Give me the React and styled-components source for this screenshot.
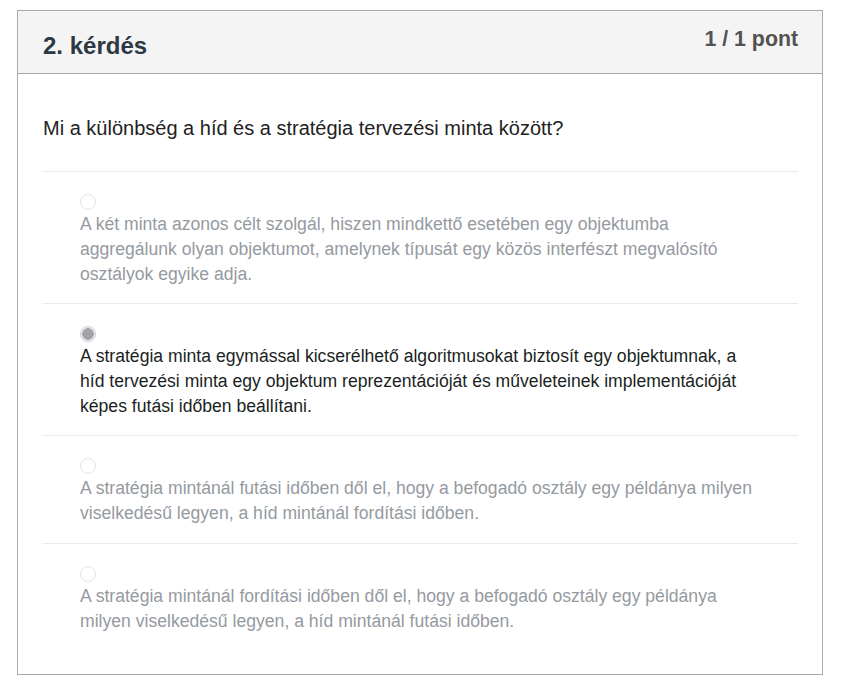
import styled, { createGlobalStyle } from "styled-components";

const GlobalStyle = createGlobalStyle`
  html, body {
    margin: 0;
    padding: 0;
    background: #ffffff;
    font-family: "Liberation Sans", Arial, sans-serif;
  }
`;

const answers = [
  {
    text: "A két minta azonos célt szolgál, hiszen mindkettő esetében egy objektumba aggregálunk olyan objektumot, amelynek típusát egy közös interfészt megvalósító osztályok egyike adja.",
    checked: false,
  },
  {
    text: "A stratégia minta egymással kicserélhető algoritmusokat biztosít egy objektumnak, a híd tervezési minta egy objektum reprezentációját és műveleteinek implementációját képes futási időben beállítani.",
    checked: true,
  },
  {
    text: "A stratégia mintánál futási időben dől el, hogy a befogadó osztály egy példánya milyen viselkedésű legyen, a híd mintánál fordítási időben.",
    checked: false,
  },
  {
    text: "A stratégia mintánál fordítási időben dől el, hogy a befogadó osztály egy példánya milyen viselkedésű legyen, a híd mintánál futási időben.",
    checked: false,
  },
];

export default function App() {
  return (
    <Page>
      <GlobalStyle />
      <Card>
        {/* Header */}
        <Header>
          <Title>2. kérdés</Title>
          <Points>1 / 1 pont</Points>
        </Header>

        {/* Body */}
        <Body>
          <Question>Mi a különbség a híd és a stratégia tervezési minta között?</Question>
          <AnswerList>
            {answers.map((a, i) => (
              <Answer key={i}>
                <Radio $checked={a.checked} />
                <AnswerText $checked={a.checked}>{a.text}</AnswerText>
              </Answer>
            ))}
          </AnswerList>
        </Body>
      </Card>
    </Page>
  );
}

const Page = styled.div`
  padding: 10px 0 0 17px;
`;

const Card = styled.div`
  width: 804px;
  border: 1px solid #a9a9a9;
  background: #ffffff;
`;

const Header = styled.header`
  display: flex;
  justify-content: space-between;
  align-items: flex-start;
  height: 63px;
  box-sizing: border-box;
  padding: 16px 24px 0 25px;
  background: #f4f4f4;
  border-bottom: 1px solid #a9a9a9;
`;

const Title = styled.h2`
  margin: 5px 0 0;
  font-size: 24px;
  line-height: 28px;
  font-weight: 700;
  color: #2d3842;
`;

const Points = styled.div`
  font-size: 21.3px;
  line-height: 24px;
  font-weight: 700;
  color: #525252;
`;

const Body = styled.section`
  padding: 42px 24px 24px 25px;
`;

const Question = styled.p`
  margin: 0 0 31px;
  font-size: 20px;
  line-height: 24px;
  color: #222222;
`;

const AnswerList = styled.div`
  display: flex;
  flex-direction: column;
`;

const Answer = styled.div`
  border-top: 1px solid #e9e9e9;
  padding: 22px 42px 16px 37px;

  &:nth-child(3) {
    padding-bottom: 17px;
  }
`;

const Radio = styled.span`
  display: block;
  width: 16px;
  height: 16px;
  margin-bottom: 2px;
  box-sizing: border-box;
  border-radius: 50%;
  border: 1px solid ${({ $checked }) => ($checked ? "#cfcfd4" : "#e2e2e2")};
  background: ${({ $checked }) =>
    $checked ? "radial-gradient(circle, #a3a3aa 0 5.5px, #ececee 6px)" : "#ffffff"};
`;

const AnswerText = styled.div`
  font-size: 17.6px;
  line-height: 25px;
  color: ${({ $checked }) => ($checked ? "#1b1f23" : "#959aa1")};
`;
